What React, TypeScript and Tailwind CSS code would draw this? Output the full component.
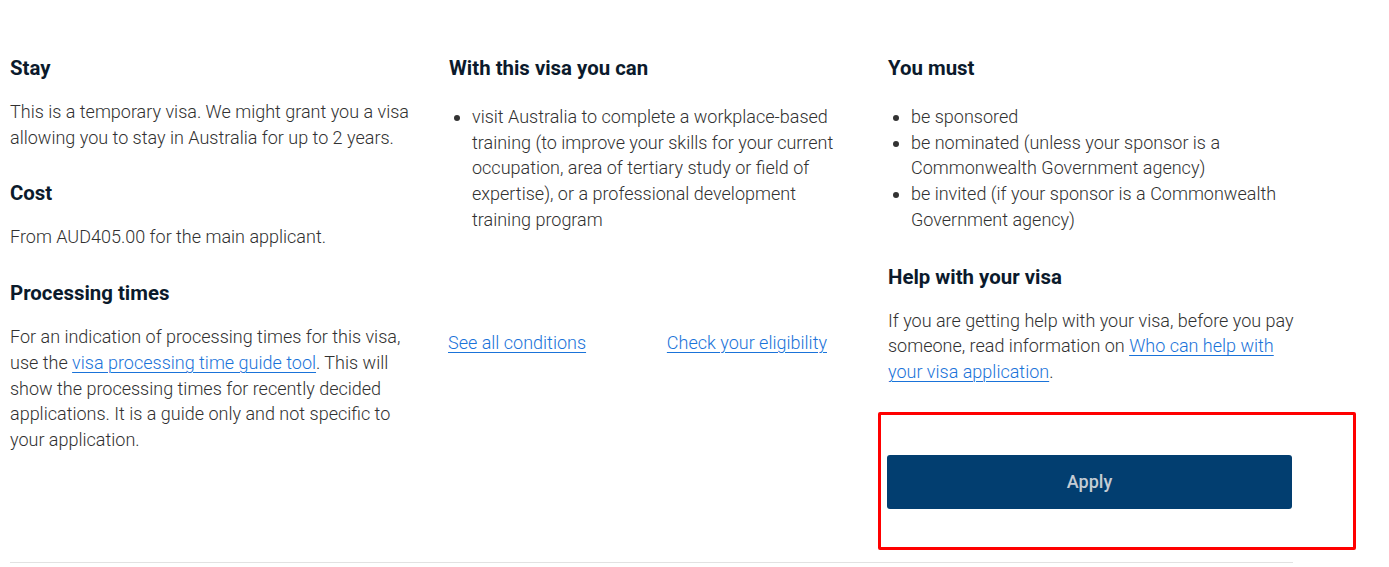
import React from 'react'

const body = 'text-[18px] leading-[25.7px] font-light text-[#313131]'
const heading = 'text-[20.4px] font-bold text-[#0b1a2c] leading-[24px]'
const link = 'text-[#1a73d9] underline decoration-1 underline-offset-[3px]'

function Bullets({ items }: { items: string[] }) {
    return (
        <ul className={`list-disc pl-[23px] marker:text-[#333] ${body}`}>
            {items.map((item, i) => (
                <li key={i}>{item}</li>
            ))}
        </ul>
    )
}

export default function App() {
    return (
        <div className="bg-white w-[1389px] h-[567px] font-['Roboto',sans-serif]">
            <div className="pl-[10px] pt-[56px] w-[1300px]">
                <div className="grid grid-cols-[405px_405px_412px] gap-x-[34px]">
                    {/* left column */}
                    <div>
                        <h3 className={heading}>Stay</h3>
                        <p className={`${body} mt-[19px]`}>
                            This is a temporary visa. We might grant you a visa allowing you to stay in Australia for up to 2 years.
                        </p>
                        <h3 className={`${heading} mt-[31px]`}>Cost</h3>
                        <p className={`${body} mt-[19px]`}>From AUD405.00 for the main applicant.</p>
                        <h3 className={`${heading} mt-[31px]`}>Processing times</h3>
                        <p className={`${body} mt-[19px]`}>
                            For an indication of processing times for this visa, use the{' '}
                            <a href="#" className={link}>visa processing time guide tool</a>. This will show the
                            processing times for recently decided applications. It is a guide only and not specific to
                            your application.
                        </p>
                    </div>

                    {/* middle column */}
                    <div>
                        <h3 className={heading}>With this visa you can</h3>
                        <div className="mt-[24px]">
                            <Bullets
                                items={[
                                    'visit Australia to complete a workplace-based training (to improve your skills for your current occupation, area of tertiary study or field of expertise), or a professional development training program',
                                ]}
                            />
                        </div>
                        <div className={`flex justify-between mt-[97px] pr-[27px] -ml-[1px] ${body}`}>
                            <a href="#" className={link}>See all conditions</a>
                            <a href="#" className={link}>Check your eligibility</a>
                        </div>
                    </div>

                    {/* right column */}
                    <div>
                        <h3 className={heading}>You must</h3>
                        <div className="mt-[24px]">
                            <Bullets
                                items={[
                                    'be sponsored',
                                    'be nominated (unless your sponsor is a Commonwealth Government agency)',
                                    'be invited (if your sponsor is a Commonwealth Government agency)',
                                ]}
                            />
                        </div>
                        <h3 className={`${heading} mt-[32px]`}>Help with your visa</h3>
                        <p className={`${body} mt-[19px]`}>
                            If you are getting help with your visa, before you pay someone, read information on{' '}
                            <a href="#" className={link}>Who can help with your visa application</a>.
                        </p>
                        <div className="relative mt-[70px] -ml-[1px] w-[405px]">
                            <div className="absolute -left-[9px] -top-[43px] w-[478px] h-[138px] border-[3px] border-[#ff0000] rounded-[2px]" />
                            <button className="w-full h-[54px] bg-[#023e70] rounded-[3px] text-[18px] font-medium text-[#c5ccd4]">
                                Apply
                            </button>
                        </div>
                    </div>
                </div>
                <div className="mt-[53px] w-[1283px] border-t border-[#e2e2e2]" />
            </div>
        </div>
    )
}
